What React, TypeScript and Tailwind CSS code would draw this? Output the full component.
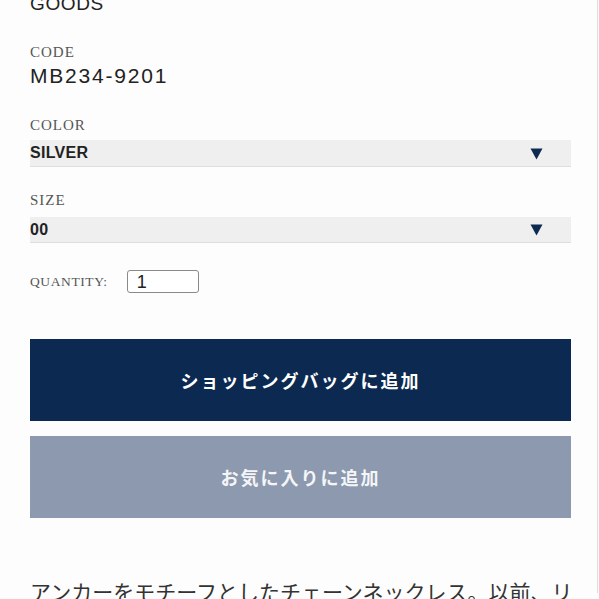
// Product detail options: code, color/size selects, quantity, action buttons.

const sans = 'font-["Liberation_Sans","Noto_Sans_CJK_JP",sans-serif]';
const serif = 'font-["Liberation_Serif",serif]';
const jp = 'font-["Noto_Sans_CJK_JP",sans-serif]';

function Label({ children, className = '' }: { children: string; className?: string }) {
  return (
    <div className={`${serif} text-[15px] leading-[15px] tracking-[1px] text-[#555] ${className}`}>
      {children}
    </div>
  );
}

function SelectBar({ value, className = '' }: { value: string; className?: string }) {
  return (
    <div
      className={`flex items-center justify-between bg-[#efefef] border-b border-[#dedede] pr-[28px] ${className}`}
    >
      <span className={`${sans} font-bold text-[16px] text-[#222] tracking-[0.3px]`}>{value}</span>
      <svg width="13" height="12" viewBox="0 0 13 12" className="mt-[1px]">
        <path d="M0.5 0.5 H12.5 L6.5 11.5 Z" fill="#0d2a50" />
      </svg>
    </div>
  );
}

export default function App() {
  return (
    <div className="w-[599px] h-[599px] overflow-hidden bg-[#fdfdfd]">
      <div className="w-[598px] h-full border-r border-[#dddddd] pl-[30px] pr-[26px]">
        <div className={`${sans} -mt-[6px] h-[20px] text-[19px] leading-[20px] tracking-[0.6px] text-[#222]`}>
          GOODS
        </div>

        <Label className="mt-[31px]">CODE</Label>
        <div className={`${sans} mt-[4px] h-[24px] text-[21px] leading-[24px] tracking-[1.8px] text-[#222]`}>
          MB234-9201
        </div>

        <Label className="mt-[30px]">COLOR</Label>
        <SelectBar value="SILVER" className="mt-[7px] h-[27px]" />

        <Label className="mt-[26px]">SIZE</Label>
        <SelectBar value="00" className="mt-[9px] h-[26px]" />

        <div className="mt-[27px] flex items-center h-[23px]">
          <span className={`${serif} text-[13.5px] tracking-[0.6px] text-[#555] mt-[2px]`}>QUANTITY:</span>
          <div className="ml-[19px] w-[72px] h-[23px] border border-[#8a8a8a] rounded-[3px] bg-white flex items-center pl-[9px]">
            <span className={`${sans} text-[18px] leading-none text-[#222]`}>1</span>
          </div>
        </div>

        <button
          className={`${jp} mt-[46px] w-full h-[82px] bg-[#0b2951] text-white font-bold text-[18px] tracking-[2px] flex items-center justify-center`}
        >
          ショッピングバッグに追加
        </button>
        <button
          className={`${jp} mt-[15px] w-full h-[82px] bg-[#8c99ae] text-[#f4f5f7] font-bold text-[18px] tracking-[2px] flex items-center justify-center`}
        >
          お気に入りに追加
        </button>

        <p className={`${jp} mt-[57px] text-[21px] leading-[32px] text-[#333] whitespace-nowrap`}>
          アンカーをモチーフとしたチェーンネックレス。以前、リ
        </p>
      </div>
    </div>
  );
}
